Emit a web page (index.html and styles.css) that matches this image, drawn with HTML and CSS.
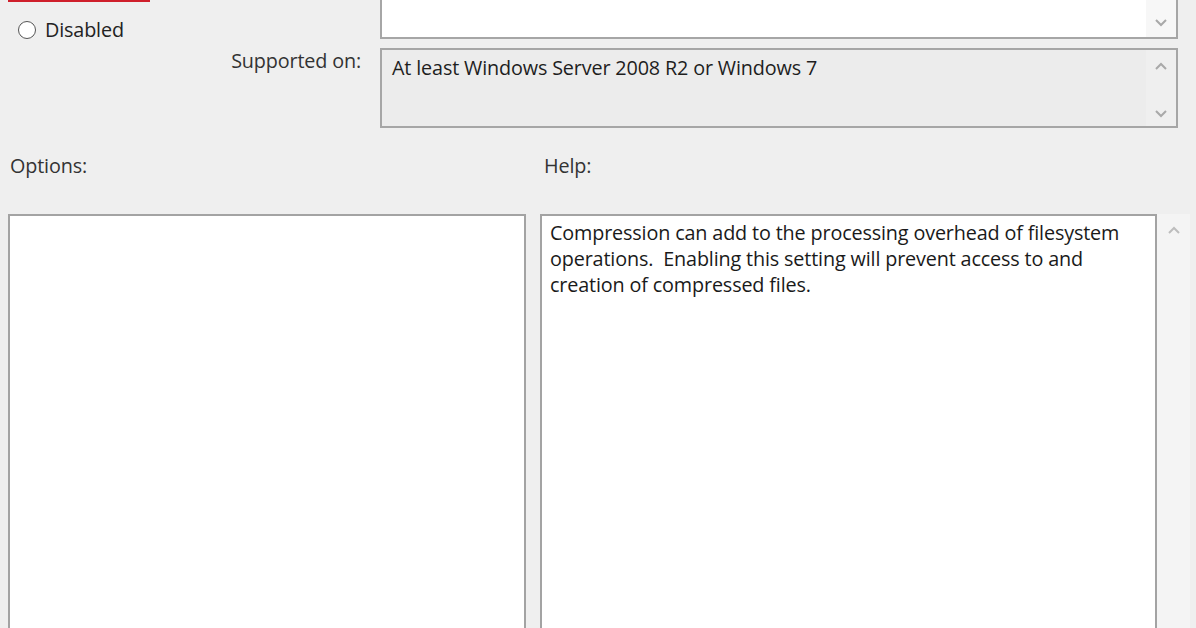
FILE: index.html
```html
<!DOCTYPE html>
<html>
<head>
<meta charset="utf-8">
<link rel="stylesheet" href="styles.css">
</head>
<body>
<div class="page">
  <div class="top">
    <div class="left-col">
      <div class="red-box"></div>
      <label class="radio"><span class="circle"></span><span>Disabled</span></label>
    </div>
    <div class="comment-box">
      <div class="box-text"></div>
      <div class="scroll">
        <span></span>
        <svg class="chev" width="14" height="9" viewBox="0 0 14 9"><polyline points="2,2 7,7 12,2" /></svg>
      </div>
    </div>
    <div class="sup-label">Supported on:</div>
    <div class="sup-box">
      <div class="box-text">At least Windows Server 2008 R2 or Windows 7</div>
      <div class="scroll">
        <svg class="chev" width="14" height="9" viewBox="0 0 14 9"><polyline points="2,7 7,2 12,7" /></svg>
        <svg class="chev" width="14" height="9" viewBox="0 0 14 9"><polyline points="2,2 7,7 12,2" /></svg>
      </div>
    </div>
  </div>
  <div class="labels">
    <div class="lbl-options">Options:</div>
    <div class="lbl-help">Help:</div>
  </div>
  <div class="bottom">
    <div class="options-box"></div>
    <div class="help-wrap">
      <div class="help-box">Compression can add to the processing overhead of filesystem operations.&nbsp; Enabling this setting will prevent access to and creation of compressed files.</div>
      <div class="help-scroll">
        <svg class="chev" width="14" height="9" viewBox="0 0 14 9"><polyline points="2,7 7,2 12,7" /></svg>
      </div>
    </div>
  </div>
</div>
</body>
</html>
```
FILE: styles.css
```css
html, body {
  margin: 0;
  padding: 0;
  background: #efefef;
  width: 1196px;
  height: 628px;
  overflow: hidden;
}
.page {
  font-family: "Open Sans", "Noto Sans", sans-serif;
  font-size: 19.8px;
  letter-spacing: -0.15px;
  line-height: 26px;
  color: #1e1e1e;
}
.top {
  display: grid;
  grid-template-columns: 380px 798px;
  grid-template-rows: 39px 80px;
  row-gap: 9px;
}
.left-col {
  grid-row: 1;
  grid-column: 1;
  display: flex;
  flex-direction: column;
  padding-left: 8px;
}
.red-box {
  width: 138px;
  height: 3px;
  border: 2px solid #cf1f2b;
  border-top: none;
  background: #e9a3a8;
}
.radio {
  display: flex;
  align-items: center;
  gap: 9px;
  margin-top: 15px;
  margin-left: 10px;
  color: #222;
}
.circle {
  width: 16px;
  height: 16px;
  border: 1.5px solid #555;
  border-radius: 50%;
  background: #fff;
}
.comment-box {
  grid-row: 1;
  grid-column: 2;
  display: flex;
  background: #fff;
  border: 2px solid #a6a6a6;
  border-top: none;
  box-sizing: border-box;
}
.box-text {
  flex: 1;
  padding: 4px 10px;
}
.scroll {
  width: 30px;
  display: flex;
  flex-direction: column;
  align-items: center;
  justify-content: space-between;
  padding: 12px 0 8px;
  background: #f7f7f7;
}
.comment-box .scroll {
  padding: 0 0 10px;
}
.chev {
  display: block;
}
.chev polyline {
  fill: none;
  stroke: #a9a9a9;
  stroke-width: 2;
}
.sup-label {
  grid-row: 2;
  grid-column: 1;
  text-align: right;
  padding-right: 19px;
  color: #333;
}
.sup-box {
  grid-row: 2;
  grid-column: 2;
  display: flex;
  background: #ececec;
  border: 2px solid #a6a6a6;
  box-sizing: border-box;
}
.sup-box .box-text {
  padding: 5px 10px;
}
.sup-box .scroll {
  background: #efefef;
}
.labels {
  display: flex;
  margin-top: 25px;
  height: 36px;
  color: #333;
}
.lbl-options {
  width: 534px;
  padding-left: 10px;
  box-sizing: border-box;
}
.lbl-help {
  padding-left: 10px;
}
.bottom {
  display: flex;
  margin-top: 25px;
  padding-left: 8px;
  gap: 14px;
}
.options-box {
  width: 518px;
  height: 440px;
  background: #fff;
  border: 2px solid #a3a3a3;
  box-sizing: border-box;
}
.help-wrap {
  display: flex;
}
.help-box {
  width: 617px;
  height: 440px;
  background: #fff;
  border: 2px solid #a3a3a3;
  box-sizing: border-box;
  padding: 4px 8px;
  color: #1a1a1a;
}
.help-scroll {
  width: 33px;
  height: 440px;
  background: #f4f4f4;
  display: flex;
  justify-content: center;
  padding-top: 12px;
  box-sizing: border-box;
}
.help-scroll .chev polyline {
  stroke: #bdbdbd;
}
```
